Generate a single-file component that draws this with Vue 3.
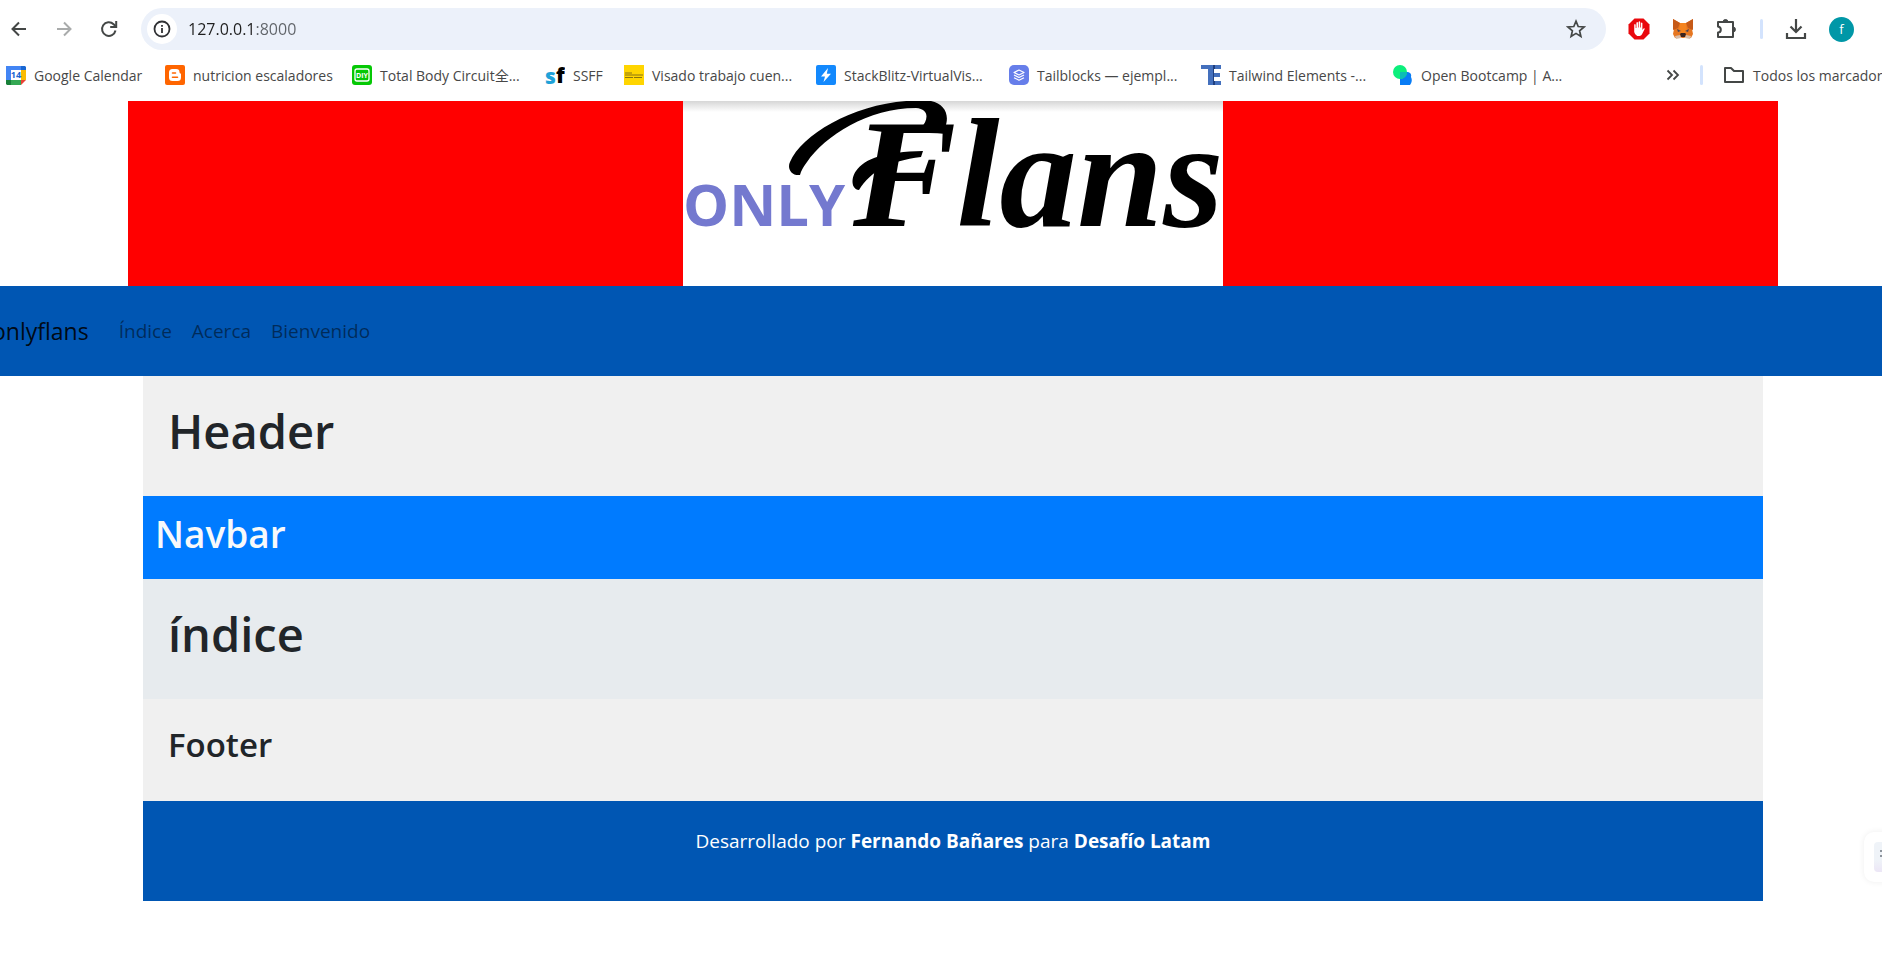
<script setup>
import { ref } from 'vue'

const address = ref('127.0.0.1:8000')

const bookmarks = [
  { icon: 'calendar', label: 'Google Calendar' },
  { icon: 'blogger', label: 'nutricion escaladores' },
  { icon: 'diy', label: 'Total Body Circuit全...' },
  { icon: 'ssff', label: 'SSFF' },
  { icon: 'visado', label: 'Visado trabajo cuen...' },
  { icon: 'bolt', label: 'StackBlitz-VirtualVis...' },
  { icon: 'layers', label: 'Tailblocks — ejempl...' },
  { icon: 'te', label: 'Tailwind Elements -...' },
  { icon: 'open', label: 'Open Bootcamp | A...' },
]

const links = ['Índice', 'Acerca', 'Bienvenido']
</script>

<template>
  <div class="window">
    <header class="chrome">
      <div class="toolbar">
        <div class="nav-buttons">
          <button type="button" aria-label="Atrás">
            <svg width="20" height="20" viewBox="0 0 20 20" fill="none" stroke="#444746" stroke-width="2"><path d="M17 10H4M10 3.500L3.500 10l6.500 6.500" /></svg>
          </button>
          <button type="button" aria-label="Adelante" disabled>
            <svg width="20" height="20" viewBox="0 0 20 20" fill="none" stroke="#a9abab" stroke-width="2"><path d="M3 10h13M10 3.500l6.500 6.500-6.500 6.500" /></svg>
          </button>
          <button type="button" aria-label="Recargar">
            <svg width="20" height="20" viewBox="0 0 20 20" fill="none" stroke="#444746" stroke-width="2"><path d="M16.500 11.500A6.800 6.800 0 1 1 14.600 5.200L16.500 7" /><path d="M17.200 2v6h-6" /></svg>
          </button>
        </div>
        <div class="omnibox">
          <button type="button" class="site-info" aria-label="Información del sitio">
            <svg width="18" height="18" viewBox="0 0 18 18"><circle cx="9" cy="9" r="7.500" fill="none" stroke="#303134" stroke-width="1.800" /><path d="M9 8v5M9 5v1.800" stroke="#303134" stroke-width="1.800" /></svg>
          </button>
          <input v-model="address" type="text" class="address" aria-label="Dirección" />
          <button type="button" aria-label="Añadir a marcadores">
            <svg width="20" height="20" viewBox="0 0 20 20" fill="none" stroke="#444746" stroke-width="1.700"><path d="M10 2.200l2.200 5.300 5.800.5-4.400 3.800 1.300 5.700L10 14.400l-4.900 3.100 1.300-5.700L2 8l5.800-.5z" /></svg>
          </button>
        </div>
        <div class="extensions">
          <button type="button" aria-label="Bloqueador de anuncios">
            <svg width="22" height="22" viewBox="0 0 22 22"><path d="M6.500.5h9l6 6v9l-6 6h-9l-6-6v-9z" fill="#e9080d" /><path d="M6.200 11V6.700q.7-1.200 1.500 0V10h.7V4.700q.8-1.200 1.600 0V9.500h.6V3.900q.8-1.100 1.600 0v5.600h.7V5q.8-1.100 1.500 0v7l1.100-1.500q1.200-.6 1.300.3L14 16.200q-.8 1.500-2.500 1.700H9.200Q6.700 17 6.200 14z" fill="#fff" /></svg>
          </button>
          <button type="button" aria-label="MetaMask">
            <svg width="22" height="22" viewBox="0 0 22 22"><path d="M1 1l7 4h6l7-4v6l-1 4 1 5-2 4-5-1-2 1h-2l-2-1-5 1-2-4 1-5-1-4z" fill="#e67620" /><path d="M1 1l7 4-2 5-5 2z" fill="#c65a18" /><path d="M21 1l-7 4 2 5 5 2z" fill="#c65a18" /><path d="M8 5h6l1 9-4 2-4-2z" fill="#f5841f" /><path d="M5 11l4 2-3 1zM17 11l-4 2 3 1z" fill="#4b4557" /><path d="M8 16l1-1h4l1 1-1 3H9z" fill="#3b2520" /><path d="M3 18l5-1 1 3-5 1zM19 18l-5-1-1 3 5 1z" fill="#d9bda8" /></svg>
          </button>
          <button type="button" aria-label="Extensiones">
            <svg width="22" height="22" viewBox="0 0 22 22" fill="none" stroke="#444746" stroke-width="2"><path d="M2 4h15v15H2v-4.500c3.500 0 4-5 0-6z" stroke-linejoin="round" /><path d="M7 4a2.500 2.500 0 0 1 5 0zM17 9a2.500 2.500 0 0 1 0 5z" fill="#444746" stroke-width="1" /></svg>
          </button>
          <span class="divider"></span>
          <button type="button" aria-label="Descargas">
            <svg width="22" height="22" viewBox="0 0 22 22" fill="none" stroke="#444746" stroke-width="2.200"><path d="M11 1v13M5.500 8.500L11 14l5.500-5.500M2 15v5h18v-5" /></svg>
          </button>
          <button type="button" class="avatar" aria-label="Perfil">f</button>
        </div>
      </div>

      <nav class="bookmarks" aria-label="Marcadores">
        <a v-for="b in bookmarks" :key="b.label" href="#" class="bookmark">
          <svg width="20" height="20" viewBox="0 0 20 20" aria-hidden="true">
            <template v-if="b.icon === 'calendar'">
              <path d="M0 1h15v4H5v10H0z" fill="#4285f4" />
              <path d="M15 1h4l1 1v3h-5z" fill="#1967d2" />
              <path d="M15 5h5v10h-5z" fill="#fbbc04" />
              <path d="M0 15h5v5H1l-1-1z" fill="#188038" />
              <path d="M5 15h10v5H5z" fill="#34a853" />
              <path d="M15 15h5l-5 5z" fill="#ea4335" />
              <path d="M5 5h10v10H5z" fill="#fff" />
              <text x="10" y="13" text-anchor="middle" font-size="9" font-weight="700" fill="#1967d2">14</text>
            </template>
            <template v-else-if="b.icon === 'blogger'">
              <rect width="20" height="20" rx="2" fill="#ff6500" />
              <path d="M7.500 4h3.700a3.300 3.300 0 0 1 3.300 3.300q0 1.400 1.500 1.500v3.700a3.500 3.500 0 0 1-3.500 3.500h-5A3.500 3.500 0 0 1 4 12.500v-5A3.500 3.500 0 0 1 7.500 4z" fill="#fff" />
              <path d="M7.500 8h3M7.500 12.300h5" stroke="#ff6500" stroke-width="1.600" stroke-linecap="round" />
            </template>
            <template v-else-if="b.icon === 'diy'">
              <rect width="20" height="20" rx="3" fill="#05c805" />
              <rect x="3" y="4" width="14" height="12" rx="2" fill="none" stroke="#fff" stroke-width="1.300" />
              <text x="10" y="13" text-anchor="middle" font-size="7" font-weight="700" fill="#fff">DIY</text>
            </template>
            <template v-else-if="b.icon === 'ssff'">
              <text x="0" y="19" font-size="21" font-weight="800" fill="#1fa2d8">s</text>
              <text x="11" y="18" font-size="21" font-weight="800" fill="#000">f</text>
            </template>
            <template v-else-if="b.icon === 'visado'">
              <rect width="20" height="20" fill="#ffd500" />
              <path d="M1 8h7M1 10h18M1 12.500h8M10 12.500h8" stroke="#8a7410" stroke-width="1" />
            </template>
            <template v-else-if="b.icon === 'bolt'">
              <rect width="20" height="20" rx="2" fill="#1389fd" />
              <path d="M12 3l-7 8.500h4L7.500 17 15 8.800h-4.200z" fill="#fff" />
            </template>
            <template v-else-if="b.icon === 'layers'">
              <rect width="20" height="20" rx="5" fill="#667eea" />
              <path d="M10 5l5 2.500-5 2.500-5-2.500zM5 10l5 2.500 5-2.500M5 12.700l5 2.500 5-2.500" fill="none" stroke="#fff" stroke-width="1.200" stroke-linejoin="round" />
            </template>
            <template v-else-if="b.icon === 'te'">
              <path d="M0 0h20v4h-7v4h6v4h-6v4h7v4H7V4H0z" fill="#4470bd" />
              <path d="M12 0h2v4h-1v12h1v4h-2z" fill="#1f3f7f" />
            </template>
            <template v-else>
              <path d="M7 7h8q4 1 3 5 2 4-1 8H7z" fill="#087cf5" />
              <circle cx="7" cy="7" r="7" fill="#0cef7c" />
              <path d="M7 7h7a7 7 0 0 1-7 7z" fill="#0dbdb5" />
            </template>
          </svg>
          <span>{{ b.label }}</span>
        </a>
        <div class="more">
          <button type="button" aria-label="Más marcadores">
            <svg width="14" height="12" viewBox="0 0 14 12" fill="none" stroke="#444746" stroke-width="1.800"><path d="M1.500 1.500L6 6l-4.500 4.500M7.500 1.500L12 6l-4.500 4.500" /></svg>
          </button>
          <span class="divider"></span>
          <a href="#" class="bookmark all">
            <svg width="22" height="20" viewBox="0 0 22 20" fill="none" stroke="#444746" stroke-width="2" stroke-linejoin="round" aria-hidden="true"><path d="M2 3h6l3 3h9v11H2z" /></svg>
            <span>Todos los marcadores</span>
          </a>
        </div>
      </nav>
    </header>

    <div class="page">
      <div class="banner">
        <svg class="logo" width="540" height="185" viewBox="0 0 540 185" role="img" aria-label="Only Flans">
          <defs>
            <linearGradient id="shade" x1="0" y1="0" x2="0" y2="1">
              <stop offset="0" stop-color="#d6d6d6" />
              <stop offset="1" stop-color="#fff" />
            </linearGradient>
          </defs>
          <rect width="540" height="185" fill="#fff" />
          <rect width="540" height="11" fill="url(#shade)" />
          <text class="logo-only" x="0" y="125">ONLY</text>
          <text class="logo-flans" x="170" y="125">Flans</text>
          <path d="M117 74C108 75 104 67 107 61C120 30 185-5 248 0C262 3 267 14 262 27L238 27C246 18 246 8 233 7C185 7 142 35 124 61Q118 69 117 74Z" />
          <path d="M176 89C168 88 168 77 173 70C182 57 202 51 240 50L238 56C206 60 188 70 176 89Z" />
        </svg>
      </div>

      <nav class="site-nav" aria-label="Principal">
        <a href="#" class="brand">onlyflans</a>
        <a v-for="l in links" :key="l" href="#" class="link">{{ l }}</a>
      </nav>

      <main class="content">
        <section class="block light"><h1>Header</h1></section>
        <section class="block primary"><h2>Navbar</h2></section>
        <section class="block tint"><h1>índice</h1></section>
        <section class="block light"><h3>Footer</h3></section>
        <footer class="credits">
          <p>Desarrollado por <strong>Fernando Bañares</strong> para <strong>Desafío Latam</strong></p>
        </footer>
      </main>
    </div>

    <aside class="widget" aria-label="Panel lateral">
      <button type="button" aria-label="Abrir panel">
        <svg width="30" height="30" viewBox="0 0 30 30"><path d="M6 9h3M6 14h3M12 9h3M12 14h3" stroke="#8d949c" stroke-width="2" /></svg>
      </button>
    </aside>
  </div>
</template>

<style>
body {
  background: #fff;
}
</style>

<style scoped>
.window {
  position: relative;
  min-height: 100vh;
  overflow: hidden;
  color: #212529;
  font-family: "Open Sans", "Noto Sans", "Noto Sans CJK SC", sans-serif;
}
.window * {
  box-sizing: border-box;
}
button {
  display: grid;
  place-items: center;
  padding: 0;
  border: 0;
  background: none;
  font-family: inherit;
}
a {
  color: inherit;
  text-decoration: none;
}
svg {
  display: block;
  flex: none;
}

.chrome {
  height: 101px;
}
.toolbar {
  display: flex;
  align-items: center;
  gap: 22px;
  padding: 8px 28px 0 9px;
}
.nav-buttons {
  display: flex;
  gap: 25px;
}
.omnibox {
  display: flex;
  flex: 1;
  align-items: center;
  height: 42px;
  padding: 0 20px 0 6px;
  border-radius: 21px;
  background: #ecf1fa;
}
.site-info {
  width: 30px;
  height: 30px;
  border-radius: 50%;
  background: #fff;
}
.address {
  flex: 1;
  min-width: 0;
  height: 30px;
  padding: 0 0 0 11px;
  border: 0;
  outline: 0;
  background: linear-gradient(to right, #1f1f1f 78px, #5f6368 78px);
  background-clip: text;
  -webkit-background-clip: text;
  color: transparent;
  font: 16px "Open Sans", sans-serif;
}
.extensions {
  display: flex;
  flex: none;
  align-items: center;
  gap: 22px;
}
.divider {
  width: 3px;
  height: 20px;
  border-radius: 2px;
  background: #d3e3fd;
}
.avatar {
  width: 25px;
  height: 25px;
  border-radius: 50%;
  background: #0097a7;
  color: #fff;
  font-size: 13px;
}

.bookmarks {
  display: grid;
  grid-template-columns: 159px 187px 193px 79px 192px 193px 192px 192px 192px 1fr;
  align-items: center;
  height: 50px;
  padding-left: 6px;
  color: #474747;
  font-size: 14px;
}
.bookmark {
  display: flex;
  align-items: center;
  gap: 8px;
  white-space: nowrap;
}
.more {
  display: flex;
  align-items: center;
  justify-content: flex-end;
  gap: 20px;
  margin-right: -15px;
}

.page {
  margin-right: -24px;
}
.banner {
  display: flex;
  justify-content: center;
  margin: 0 128px;
  background: #f00;
}
.logo-only {
  fill: #7479cf;
  font-size: 58px;
  font-weight: 700;
}
.logo-flans {
  font: italic 700 155px "Liberation Serif", serif;
}
.site-nav {
  display: flex;
  align-items: center;
  gap: 20px;
  height: 90px;
  margin-left: -8px;
  background: #0056b3;
}
.brand {
  margin-right: 10px;
  color: rgba(0, 0, 0, 0.9);
  font-size: 23px;
}
.link {
  color: rgba(0, 0, 0, 0.5);
  font-size: 19px;
}
.content {
  margin: 0 143px;
}
.block {
  padding: 25px;
}
h1,
h2,
h3 {
  margin: 0 0 10px;
  font-weight: 600;
}
h1 {
  font-size: 47px;
  line-height: 60px;
}
h2 {
  font-size: 37px;
  line-height: 48px;
}
h3 {
  font-size: 33px;
  line-height: 42px;
}
.light {
  background: #f0f0f0;
}
.primary {
  padding: 14px 12px 11px;
  background: #007bff;
  color: #f8f9fa;
}
.tint {
  background: #e7ebee;
}
.credits {
  padding: 25px;
  background: #0056b3;
  color: #fff;
  font-size: 19px;
  line-height: 30px;
  text-align: center;
}
.credits p {
  margin: 0 0 20px;
}

.widget {
  position: absolute;
  top: 832px;
  right: -32px;
  padding: 10px;
  border-radius: 10px;
  background: #fff;
  box-shadow: 0 0 6px rgba(0, 0, 0, 0.07);
}
.widget button {
  border-radius: 4px;
  background: linear-gradient(#eff3f8 60%, #ece6f6);
}
</style>
